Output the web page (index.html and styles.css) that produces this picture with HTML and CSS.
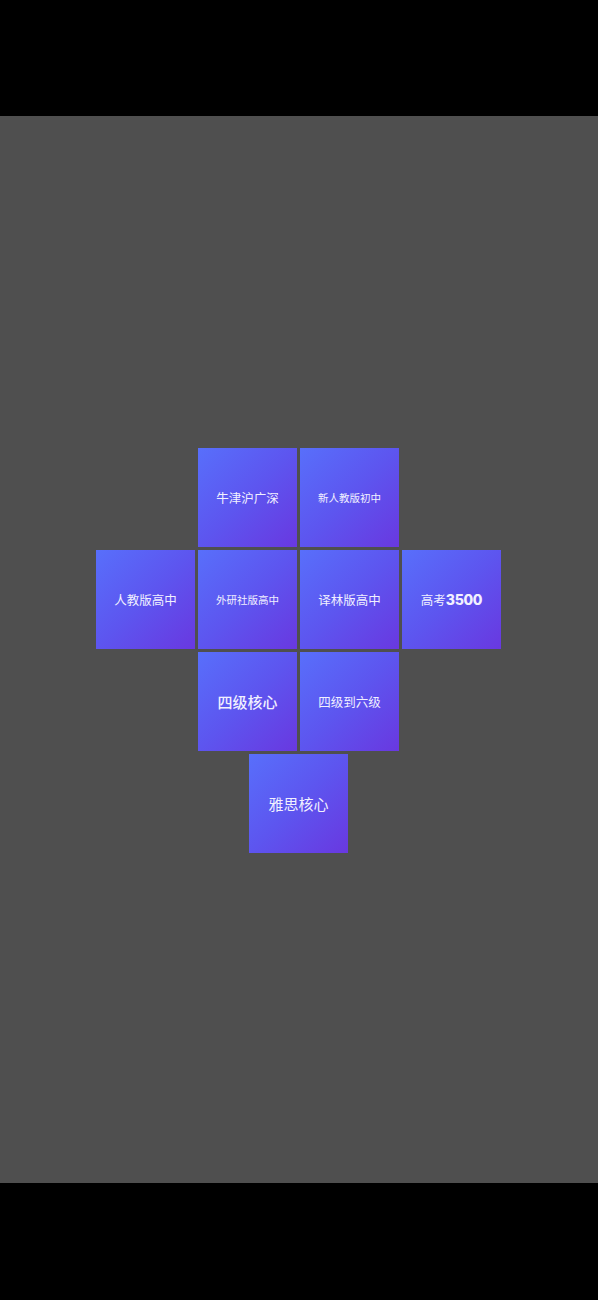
FILE: index.html
```html
<!DOCTYPE html>
<html lang="zh">
<head>
<meta charset="utf-8">
<link rel="stylesheet" href="styles.css">
</head>
<body>
<div class="bar-top"></div>
<main class="stage">
  <div class="board">
    <div class="row">
      <div class="tile"><span class="t5">牛津沪广深</span></div>
      <div class="tile"><span class="t6">新人教版初中</span></div>
    </div>
    <div class="row">
      <div class="tile"><span class="t5">人教版高中</span></div>
      <div class="tile"><span class="t6">外研社版高中</span></div>
      <div class="tile"><span class="t5">译林版高中</span></div>
      <div class="tile"><span class="t5">高考<b>3500</b></span></div>
    </div>
    <div class="row">
      <div class="tile"><span class="t4 strong">四级核心</span></div>
      <div class="tile"><span class="t5">四级到六级</span></div>
    </div>
    <div class="row">
      <div class="tile"><span class="t4">雅思核心</span></div>
    </div>
  </div>
</main>
<div class="bar-bottom"></div>
</body>
</html>
```

FILE: styles.css
```css
html, body {
  margin: 0;
  padding: 0;
  background: #000;
  font-family: "Noto Sans CJK SC", "Noto Sans", sans-serif;
}
.bar-top {
  height: 116px;
  background: #000;
}
.bar-bottom {
  height: 117px;
  background: #000;
}
.stage {
  height: 1067px;
  background: #4f4f4f;
  display: flex;
  align-items: center;
  justify-content: center;
}
.board {
  display: flex;
  flex-direction: column;
  gap: 3px;
  padding: 2px 1px 0 0;
}
.row {
  display: flex;
  justify-content: center;
  gap: 3px;
}
.tile {
  width: 99px;
  height: 99px;
  background: linear-gradient(135deg, #586ffb 0%, #5d55ef 50%, #6938e0 100%);
  display: flex;
  align-items: center;
  justify-content: center;
  color: #f1f0ff;
  white-space: nowrap;
  font-weight: 400;
}
.t4 { font-size: 15px; }
.t5 { font-size: 12.5px; }
.t6 { font-size: 10.5px; }
.strong { font-weight: 500; }
.tile b {
  font-family: "Inter", "Noto Sans", sans-serif;
  font-weight: 800;
  font-size: 14px;
  letter-spacing: -0.3px;
}
```
